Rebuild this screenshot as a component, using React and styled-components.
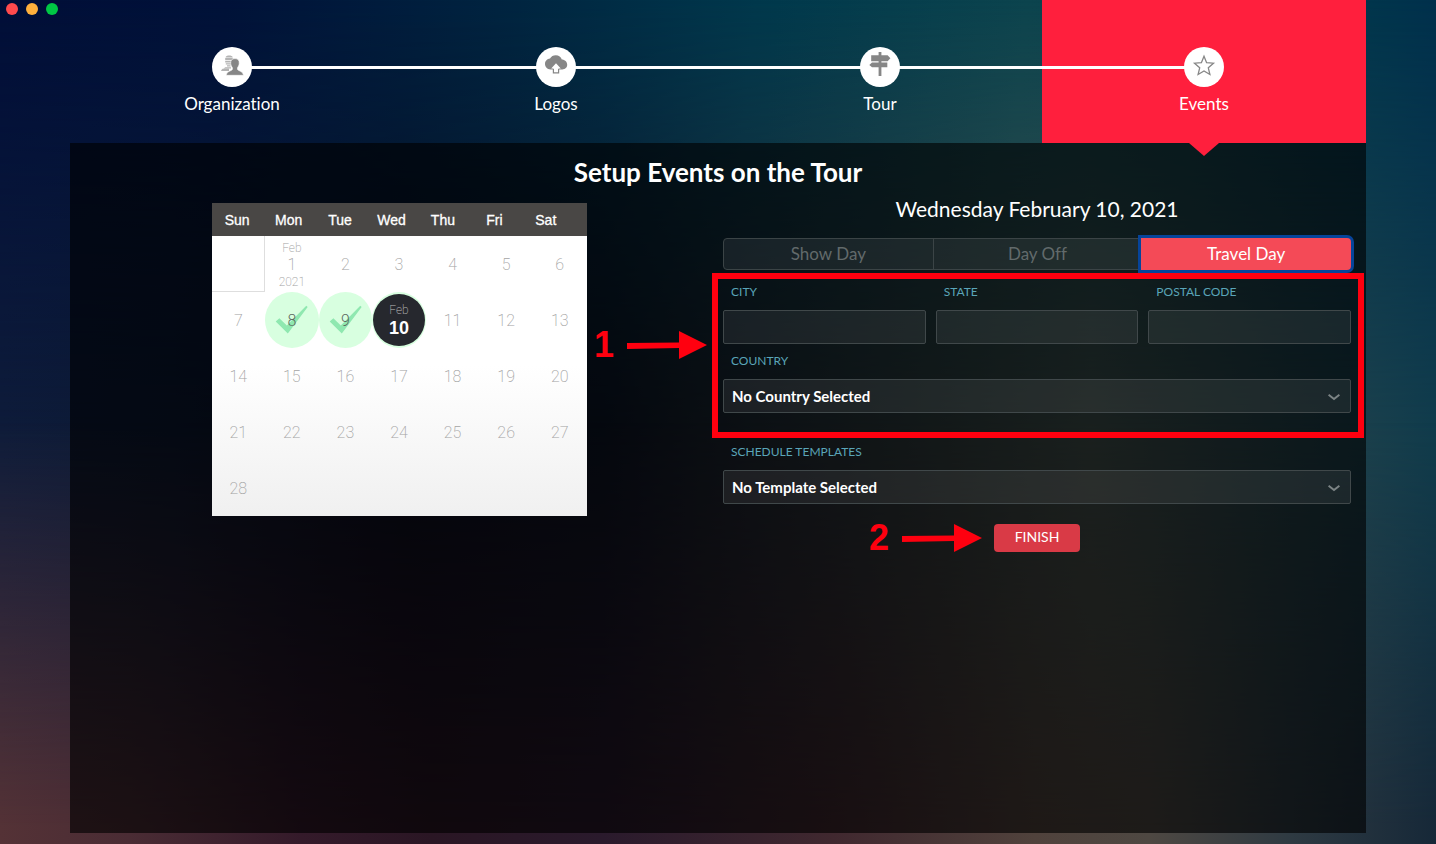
import React, { useState } from "react";
import styled, { createGlobalStyle, css } from "styled-components";

const ui = `Lato, "Open Sans", sans-serif`;
const helvetica = `"Liberation Sans", Arial, sans-serif`;

const GlobalStyle = createGlobalStyle`
  *, *::before, *::after { box-sizing: border-box; }
  body {
    margin: 0;
    background: #001238;
    color: #fff;
    font-family: ${ui};
    font-variant-ligatures: none;
  }
  button, input, select { font: inherit; color: inherit; margin: 0; }
`;

const Page = styled.div`
  position: relative;
  isolation: isolate;
  min-height: 100vh;
  display: flex;
  flex-direction: column;
  padding: 0 70px 11px;
  background: linear-gradient(
    95deg,
    #000e38 0%, #001239 15%, #002440 33%, #00384c 50%,
    #0c444e 68%, #0a404c 80%, #00344c 92%, #002a4c 100%
  );
`;

const Glow = styled.div`
  position: absolute;
  inset: 0;
  z-index: -1;
`;

const MiddleGlow = styled(Glow)`
  background: linear-gradient(
    90deg,
    #0e1c3a 0%, #0c1a34 12%, #090e20 28%, #0d1526 42%,
    #202a34 52%, #344242 66%, #445450 76%, #25444c 90%, #103c4c 100%
  );
  mask-image: linear-gradient(180deg, transparent 0%, #000 52%);
`;

const BottomGlow = styled(Glow)`
  background: linear-gradient(
    90deg,
    #543236 0%, #4a2c34 9%, #341a2a 21%, #2a1624 30%, #2a1a2c 42%,
    #40282f 58%, #50423c 72%, #4e4842 80%, #2e3a42 90%, #162838 100%
  );
  mask-image: linear-gradient(180deg, transparent 50%, #000 98%);
`;

const WindowControls = styled.div`
  position: absolute;
  top: 3px;
  left: 6px;
  display: flex;
  gap: 8px;
`;

const WindowButton = styled.button`
  width: 12px;
  height: 12px;
  padding: 0;
  border: 0;
  border-radius: 50%;
  background: ${(p) => p.$color};
`;

const Steps = styled.ol`
  display: grid;
  grid-template-columns: repeat(4, 1fr);
  margin: 0;
  padding: 0;
  list-style: none;
`;

const Step = styled.li`
  position: relative;
  display: flex;
  flex-direction: column;
  align-items: center;
  gap: 7px;
  height: 143px;
  padding-top: 47px;
  line-height: 20px;

  &:not(:first-child)::before {
    content: "";
    position: absolute;
    top: 66px;
    left: calc(-50% + 18px);
    right: calc(50% + 18px);
    height: 3px;
    background: #fff;
  }

  ${(p) =>
    p.$active &&
    css`
      background: #ff1f3d;
      &::after {
        content: "";
        position: absolute;
        top: 100%;
        left: calc(50% - 15px);
        border: 15px solid transparent;
        border-width: 13px 15px 0;
        border-top-color: #ff1f3d;
      }
    `}
`;

const StepDisc = styled.span`
  width: 40px;
  height: 40px;
  border-radius: 50%;
  background: #fff;
  svg { display: block; width: 40px; height: 40px; }
`;

const StepLabel = styled.span`
  font-size: 17px;
`;

const Panel = styled.main`
  flex: 1;
  padding: 15px;
  background: rgba(0, 0, 0, 0.62);
`;

const Title = styled.h1`
  margin: 0;
  font-size: 26px;
  line-height: 28px;
  font-weight: 700;
  text-align: center;
`;

const Columns = styled.div`
  display: grid;
  grid-template-columns: repeat(2, minmax(0, 1fr));
  gap: 10px;
  padding-top: 8px;
`;

const CalendarColumn = styled.section`
  display: flex;
  justify-content: center;
  align-items: flex-start;
  padding-top: 9px;
`;

const Calendar = styled.table`
  display: block;
  width: 375px;
  font-family: ${helvetica};
  background: linear-gradient(180deg, #fff 52%, #f0f0f0 100%);
  thead, tbody { display: block; }
`;

const WeekHeader = styled.tr`
  display: grid;
  grid-template-columns: repeat(7, 1fr);
  padding-right: 15px;
  background: #494745;
`;

const Weekday = styled.th`
  padding: 2px 0 0;
  font-size: 14px;
  line-height: 31px;
  font-weight: 400;
  -webkit-text-stroke: 0.3px #fff;
`;

const Week = styled.tr`
  display: grid;
  grid-template-columns: repeat(7, 1fr);
`;

const DayCell = styled.td`
  height: 56px;
  padding: 0;
  ${(p) =>
    p.$blank &&
    css`
      border: 1px solid #dedede;
      border-width: 0 1px 1px 0;
    `}
`;

const Day = styled.button`
  position: relative;
  display: flex;
  flex-direction: column;
  align-items: center;
  justify-content: center;
  width: 100%;
  height: 56px;
  padding: ${(p) => (p.$state === "selected" ? "0" : "2px 0 0")};
  border: 0;
  border-radius: ${(p) => (p.$state ? "50%" : "0")};
  background: ${(p) => (p.$state ? "#d8ffe0" : "none")};
  color: ${(p) => (p.$state ? "#5c6a60" : "#a4a4a4")};
  font-family: Roboto, ${helvetica};
  font-size: 16px;
  line-height: 18px;
  font-weight: ${(p) => (p.$state ? 300 : 200)};
  svg { position: absolute; inset: 0; width: 100%; height: 100%; }
`;

const DayNumber = styled.span`
  position: relative;
`;

const DayNote = styled.small`
  font-size: 12px;
  line-height: 16px;
  font-weight: 200;
`;

const SelectedDisc = styled.span`
  display: flex;
  flex-direction: column;
  align-items: center;
  justify-content: center;
  width: 52px;
  height: 52px;
  border-radius: 50%;
  background: #26282e;
  color: #bbb;
  strong { color: #fff; font: 700 18px/20px ${helvetica}; }
`;

const Form = styled.form`
  display: flex;
  flex-direction: column;
`;

const DateHeading = styled.h2`
  margin: 0;
  font-size: 21px;
  line-height: 30px;
  font-weight: 400;
  text-align: center;
`;

const DayTypes = styled.div`
  display: grid;
  grid-template-columns: repeat(3, 1fr);
  margin: 14px 0 5px;
  border: 1px solid #3b4446;
  border-radius: 4px;
  background: rgba(255, 255, 255, 0.07);
`;

const DayType = styled.button`
  height: 30px;
  padding: 0;
  border: 0;
  background: none;
  color: #626a6b;
  font-size: 17px;
  line-height: 30px;

  & + & { border-left: 1px solid #3b4446; }

  &[aria-pressed="true"] {
    height: 32px;
    margin: -1px -1px -1px 0;
    border: 0;
    border-radius: 0 4px 4px 0;
    background: #f44a57;
    box-shadow: 0 0 0 3px #06449a;
    color: #fff;
  }
`;

const AddressGroup = styled.div`
  position: relative;
  display: grid;
  grid-template-columns: repeat(3, minmax(0, 1fr));
  column-gap: 10px;
  padding-bottom: 22px;
`;

const FieldBox = styled.div`
  display: flex;
  flex-direction: column;
  grid-column: ${(p) => (p.$wide ? "1 / -1" : "auto")};
`;

const Label = styled.label`
  padding: 0 0 2px 8px;
  color: #5aa5b8;
  font-size: 12px;
  line-height: 33px;
  text-transform: uppercase;
`;

const control = css`
  width: 100%;
  height: 34px;
  padding: 0 8px;
  border: 1px solid #40484a;
  border-radius: 2px;
  background: rgba(255, 255, 255, 0.07);
`;

const TextInput = styled.input`
  ${control}
`;

const SelectWrap = styled.div`
  position: relative;
  svg {
    position: absolute;
    top: 14px;
    right: 11px;
    width: 12px;
    height: 8px;
    pointer-events: none;
  }
`;

const Select = styled.select`
  ${control}
  appearance: none;
  font-size: 15px;
  font-weight: 700;
  option { color: #000; }
`;

const Actions = styled.div`
  display: flex;
  justify-content: center;
  padding-top: 20px;
`;

const FinishWrap = styled.div`
  position: relative;
`;

const FinishButton = styled.button`
  display: block;
  width: 86px;
  height: 28px;
  padding: 0 0 2px;
  border: 0;
  border-radius: 4px;
  background: #d93a46;
  font-size: 14px;
  line-height: 26px;
`;

const Highlight = styled.div`
  position: absolute;
  inset: -2px -13px -3px -11px;
  border: 6px solid #ff000f;
  pointer-events: none;
`;

const Callout = styled.div`
  position: absolute;
  right: calc(100% + ${(p) => p.$gap}px);
  top: ${(p) => p.$top}px;
  display: flex;
  align-items: center;
  gap: 13px;
  color: #ff000f;
  font: 700 36px/28px ${helvetica};
  pointer-events: none;
  svg { display: block; width: 80px; height: 28px; }
`;

const OrganizationIcon = () => (
  <svg viewBox="0 0 40 40" aria-hidden="true">
    <g fill="#b4b4b4">
      <path d="M13.600 10.400C13.800 7.800 20.400 7.800 20.800 10.400z" />
      <path d="M13.200 11H20.800V13.200H13.200zM13.200 14H20V15.400H13.200zM13.800 16.200H19V17.400H13.800zM15 18.200H18.600V19.400H15z" />
      <path d="M13.400 20.200H19V21.400H11.400zM10.600 21.800H17V24H9C9.200 23 9.800 22.400 10.600 21.800z" />
    </g>
    <path
      d="M23 11.600c3 0 4.400 1.800 4.200 4.600-.1 2-.9 3.400-1.700 4.500v1.600c0 1.400 5.800 2 6 6H14.200c.2-4 6.200-4.600 6.200-6v-1.600c-.8-1.100-1.600-2.500-1.700-4.500-.2-2.800 1.300-4.600 4.300-4.600z"
      fill="#868686"
      stroke="#fff"
      strokeWidth="0.600"
    />
  </svg>
);

const CloudIcon = () => (
  <svg viewBox="0 0 40 40" aria-hidden="true">
    <path
      d="M14.500 22.500C11.400 22.500 9 20.100 9 17.100c0-3.200 2.300-5.300 5-5.500C15.100 9.500 17.300 8.300 19.800 8.300c3 0 5.300 1.700 6 4.200 3 .1 5.400 2.100 5.400 5.300 0 2.700-2.200 4.700-4.900 4.700z"
      fill="#868686"
    />
    <path
      d="M20 16.200L24.800 21.400H22.500V25.800H17.500V21.400H15.200z"
      fill="#fff"
    />
    <path d="M17.400 22V25.800H22.600V22" fill="none" stroke="#868686" strokeWidth="1.200" />
  </svg>
);

const SignpostIcon = () => (
  <svg viewBox="0 0 40 40" aria-hidden="true" fill="#868686">
    <path d="M18.600 5H21.400V29H18.600z" />
    <path d="M11.200 8.200H27.600L30.400 11.200L27.600 14.200H11.200z" />
    <path d="M12 15.600H27.300V20.200H12L9.300 17.900z" />
  </svg>
);

const StarIcon = () => (
  <svg viewBox="0 0 40 40" aria-hidden="true">
    <path
      d="M20 9.200L22.600 15.700L29.500 16.200L24.300 20.800L25.900 27.500L20 23.900L14.100 27.500L15.700 20.800L10.500 16.200L17.400 15.700z"
      fill="none"
      stroke="#868686"
      strokeWidth="1.300"
    />
  </svg>
);

const TickMark = () => (
  <svg viewBox="0 0 54 56" aria-hidden="true">
    <path d="M10.800 29.500L14.500 26.200L22 33.600L41.600 13.700L43 15L23 41.700z" fill="#8fe8b0" />
  </svg>
);

const Chevron = () => (
  <svg viewBox="0 0 12 8" aria-hidden="true">
    <path d="M0.600 1.800L6 6L11.400 1.800" fill="none" stroke="#7c8485" strokeWidth="2" />
  </svg>
);

const Arrow = () => (
  <svg viewBox="0 0 80 28" aria-hidden="true">
    <path d="M0 12L52 11.500V0L80 14L52 28V17L0 18z" fill="#ff000f" />
  </svg>
);

const steps = [
  ["Organization", OrganizationIcon],
  ["Logos", CloudIcon],
  ["Tour", SignpostIcon],
  ["Events", StarIcon],
];
const weekdays = ["Sun", "Mon", "Tue", "Wed", "Thu", "Fri", "Sat"];
const weeks = [0, 1, 2, 3, 4].map((w) =>
  weekdays.map((_, d) => w * 7 + d).filter((n) => n <= 28)
);
const dayTypes = ["Show Day", "Day Off", "Travel Day"];
const completed = [8, 9];
const selected = 10;

function CalendarDay({ day }) {
  if (day === selected) {
    return (
      <Day type="button" $state="selected" aria-pressed="true">
        <SelectedDisc>
          <DayNote>Feb</DayNote>
          <strong>{day}</strong>
        </SelectedDisc>
      </Day>
    );
  }
  const done = completed.includes(day);
  return (
    <Day type="button" $state={done ? "done" : undefined}>
      {done && <TickMark />}
      {day === 1 && <DayNote>Feb</DayNote>}
      <DayNumber>{day}</DayNumber>
      {day === 1 && <DayNote>2021</DayNote>}
    </Day>
  );
}

function TextField({ id, label }) {
  return (
    <FieldBox>
      <Label htmlFor={id}>{label}</Label>
      <TextInput id={id} type="text" />
    </FieldBox>
  );
}

function SelectField({ id, label, placeholder }) {
  return (
    <FieldBox $wide>
      <Label htmlFor={id}>{label}</Label>
      <SelectWrap>
        <Select id={id}>
          <option>{placeholder}</option>
        </Select>
        <Chevron />
      </SelectWrap>
    </FieldBox>
  );
}

export default function App() {
  const [dayType, setDayType] = useState("Travel Day");
  return (
    <>
      <GlobalStyle />
      <Page>
        <MiddleGlow />
        <BottomGlow />
        <Steps>
          {steps.map(([name, Icon]) => (
            <Step key={name} $active={name === "Events"}>
              <StepDisc>
                <Icon />
              </StepDisc>
              <StepLabel>{name}</StepLabel>
            </Step>
          ))}
        </Steps>
        <WindowControls>
          <WindowButton $color="#ff4a4d" aria-label="Close" />
          <WindowButton $color="#ffb03c" aria-label="Minimize" />
          <WindowButton $color="#00c844" aria-label="Zoom" />
        </WindowControls>
        <Panel>
          <Title>Setup Events on the Tour</Title>
          <Columns>
            <CalendarColumn>
              <Calendar>
                <thead>
                  <WeekHeader>
                    {weekdays.map((d) => (
                      <Weekday key={d} scope="col">{d}</Weekday>
                    ))}
                  </WeekHeader>
                </thead>
                <tbody>
                  {weeks.map((days) => (
                    <Week key={days[0]}>
                      {days.map((day) => (
                        <DayCell key={day} $blank={day === 0}>
                          {day > 0 && <CalendarDay day={day} />}
                        </DayCell>
                      ))}
                    </Week>
                  ))}
                </tbody>
              </Calendar>
            </CalendarColumn>
            <Form onSubmit={(e) => e.preventDefault()}>
              <DateHeading>Wednesday February 10, 2021</DateHeading>
              <DayTypes role="group" aria-label="Day type">
                {dayTypes.map((t) => (
                  <DayType
                    key={t}
                    type="button"
                    aria-pressed={t === dayType}
                    onClick={() => setDayType(t)}
                  >
                    {t}
                  </DayType>
                ))}
              </DayTypes>
              <AddressGroup>
                <TextField id="city" label="City" />
                <TextField id="state" label="State" />
                <TextField id="postal" label="Postal Code" />
                <SelectField id="country" label="Country" placeholder="No Country Selected" />
                <Highlight />
                <Callout $gap={16} $top={56}>
                  1
                  <Arrow />
                </Callout>
              </AddressGroup>
              <SelectField
                id="template"
                label="Schedule Templates"
                placeholder="No Template Selected"
              />
              <Actions>
                <FinishWrap>
                  <FinishButton type="submit">FINISH</FinishButton>
                  <Callout $gap={12} $top={0}>
                    2
                    <Arrow />
                  </Callout>
                </FinishWrap>
              </Actions>
            </Form>
          </Columns>
        </Panel>
      </Page>
    </>
  );
}
